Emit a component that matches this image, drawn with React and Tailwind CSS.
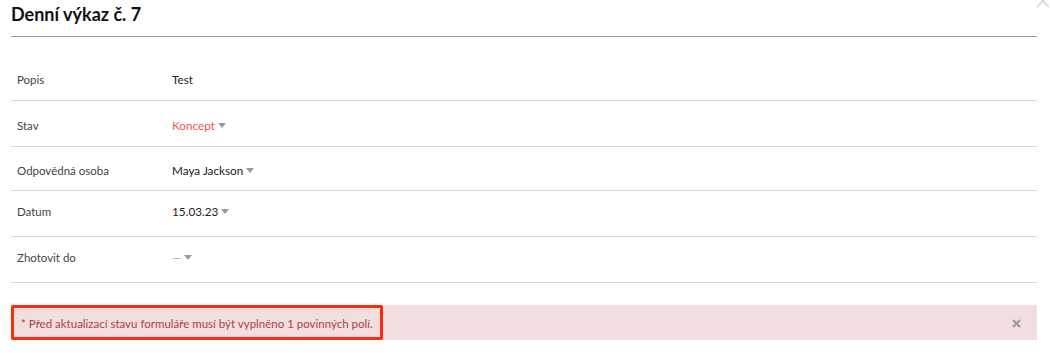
import React from "react";

const Caret = () => (
  <svg width="8" height="5" viewBox="0 0 8 5" className="ml-[3px] inline-block">
    <path d="M0 0h8L4 5z" fill="#9a9a9a" />
  </svg>
);

const rows = [
  { label: "Popis", value: "Test", h: "h-[46px] pt-[5px]" },
  { label: "Stav", value: "Koncept", red: true, caret: true, h: "h-[46px] pt-[4px]" },
  { label: "Odpovědná osoba", value: "Maya Jackson", caret: true, h: "h-[44px] pt-[4px]" },
  { label: "Datum", value: "15.03.23", caret: true, h: "h-[46px] pb-[4px]" },
  { label: "Zhotovit do", value: "—", dim: true, caret: true, h: "h-[46px] pb-[4px]" },
];

export default function App() {
  return (
    <div
      className="relative w-[1051px] h-[356px] bg-white overflow-hidden text-[#333]"
      style={{ fontFamily: "Lato, 'Open Sans', sans-serif" }}
    >
      {/* close icon, cut at top edge */}
      <svg width="14" height="14" viewBox="0 0 14 14" className="absolute right-[1px] top-[-6px]">
        <path d="M1 1l12 12M13 1L1 13" stroke="#cfcfcf" strokeWidth="1.2" />
      </svg>

      <div className="ml-[11px] w-[1026px]">
        <div className="h-[37px] border-b border-[#9a9a9e] flex items-start pt-[2px]">
          <h1 className="text-[18px] font-bold text-[#111] leading-[24px]">Denní výkaz č. 7</h1>
        </div>

        <div className="pt-[18px]">
          {rows.map((r) => (
            <div
              key={r.label}
              className={`${r.h} flex items-center border-b border-[#d6d5dc]`}
            >
              <div className="w-[161px] pl-[6px] text-[11.5px] text-[#444]">{r.label}</div>
              <div
                className={`flex items-center text-[11.75px] ${
                  r.red ? "text-[#f2545b]" : r.dim ? "text-[#aaa]" : "text-[#222]"
                }`}
              >
                <span>{r.value}</span>
                {r.caret && <Caret />}
              </div>
            </div>
          ))}
        </div>

        <div className="relative mt-[22px] h-[35px] bg-[#f2dede] flex items-center justify-between pl-[10px] pr-[16px]">
          <span className="text-[11.5px] text-[#a94442] mt-[2px]">
            * Před aktualizací stavu formuláře musí být vyplněno 1 povinných polí.
          </span>
          <svg width="9" height="9" viewBox="0 0 9 9" className="mt-[2px]">
            <path d="M1 1l7 7M8 1L1 8" stroke="#999" strokeWidth="2" />
          </svg>
          <div className="absolute left-0 top-0 w-[372px] h-[35px] border-[3px] border-[#ff2a0a] rounded-[2px]" />
        </div>
      </div>
    </div>
  );
}
